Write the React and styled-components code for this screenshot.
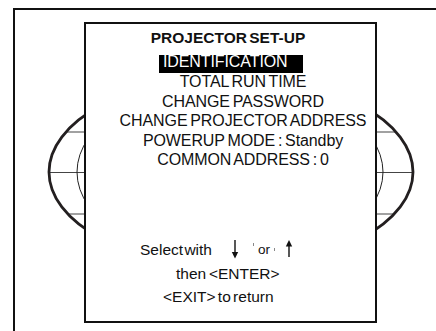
import React from 'react';
import styled, { createGlobalStyle } from 'styled-components';

const GlobalStyle = createGlobalStyle`
    html, body {
        margin: 0;
        padding: 0;
        background: #fff;
        overflow: hidden;
    }
    body {
        font-family: "Liberation Sans", Arial, sans-serif;
        color: #111;
    }
`;

const Frame = styled.div`
    position: relative;
    margin: 8px 0 0 13px;
    height: 323px;
    border-top: 2px solid #111;
    border-left: 2px solid #111;
    box-sizing: border-box;
`;

const Globe = styled.svg`
    position: absolute;
    left: 0;
    top: 0;
    width: 421px;
    height: 321px;
`;

const Screen = styled.div`
    position: relative;
    z-index: 1;
    margin: 12px 0 0 69px;
    width: 293px;
    height: 301px;
    box-sizing: border-box;
    border: 2px solid #111;
    background: #fff;
    display: flex;
    flex-direction: column;
    padding-top: 4px;
    padding-bottom: 12.5px;
`;

const Title = styled.div`
    font-weight: bold;
    font-size: 15.5px;
    line-height: 19.5px;
    height: 19.5px;
    text-align: center;
    word-spacing: -2px;
    padding-right: 5px;
`;

const Menu = styled.div`
    margin-top: 5px;
    display: flex;
    flex-direction: column;
`;

const Item = styled.div`
    font-size: 16px;
    line-height: 19.5px;
    height: 19.5px;
    text-align: center;
    white-space: nowrap;
    letter-spacing: -0.1px;
    word-spacing: -1.5px;
    padding-left: ${p => p.$shift}px;
`;

const Highlight = styled.div`
    height: 19.5px;
    padding-top: 2.5px;
    padding-left: 73px;
    box-sizing: border-box;
`;

const Bar = styled.div`
    width: 144px;
    min-width: 144px;
    height: 18px;
    box-sizing: border-box;
    padding: 0 16px 0 4px;
    background: #000;
    color: #fff;
    font-size: 16px;
    letter-spacing: -0.1px;
    line-height: 14px;
    white-space: nowrap;
`;

const Spacer = styled.div`
    flex: 1;
`;

const Hint = styled.div`
    display: flex;
    align-items: flex-start;
    height: 23.5px;
    font-size: 15.5px;
    line-height: 23.5px;
    white-space: nowrap;
    word-spacing: ${p => p.$tight}px;
    padding-left: ${p => p.$indent}px;
`;

const Arrow = styled.svg`
    flex: none;
    width: 8px;
    height: 20px;
    margin-top: 2px;
    margin-left: ${p => p.$gap}px;
`;

const Tick = styled.span`
    flex: none;
    width: 1px;
    height: 3px;
    background: #888;
    margin-top: ${p => p.$top}px;
    margin-left: ${p => p.$gap}px;
`;

const Small = styled.span`
    font-size: 13.5px;
    margin-left: 4px;
`;

function DownArrow({ gap }) {
    return (
        <Arrow $gap={gap} viewBox="0 0 8 20">
            <line x1="4" y1="0" x2="4" y2="13" stroke="#111" strokeWidth="1.4" />
            <polygon points="0.8,12 7.2,12 4,18.5" fill="#111" />
        </Arrow>
    );
}

function UpArrow({ gap }) {
    return (
        <Arrow $gap={gap} viewBox="0 0 8 20">
            <polygon points="0.8,6.5 7.2,6.5 4,0" fill="#111" />
            <line x1="4" y1="5" x2="4" y2="17" stroke="#111" strokeWidth="1.4" />
        </Arrow>
    );
}

const items = [
    'TOTAL RUN TIME',
    'CHANGE PASSWORD',
    'CHANGE PROJECTOR ADDRESS',
    'POWERUP MODE : Standby',
    'COMMON ADDRESS : 0',
];

export default function App() {
    return (
        <>
            <GlobalStyle />
            <Frame>
                <Globe viewBox="15 10 421 321">
                    <defs>
                        <clipPath id="globe-clip">
                            <ellipse cx="231" cy="172" rx="182" ry="95" />
                        </clipPath>
                    </defs>
                    <g clipPath="url(#globe-clip)" stroke="#444" strokeWidth="1.2">
                        <line x1="40" y1="132" x2="420" y2="132" />
                        <line x1="40" y1="172.5" x2="420" y2="172.5" />
                        <line x1="40" y1="214" x2="420" y2="214" />
                    </g>
                    <ellipse cx="230" cy="172" rx="153" ry="89" fill="none" stroke="#222" strokeWidth="1" />
                    <ellipse cx="231" cy="172" rx="182" ry="95" fill="none" stroke="#231f20" strokeWidth="2.8" />
                </Globe>
                <Screen>
                    <Title>PROJECTOR SET-UP</Title>
                    <Menu>
                        <Highlight>
                            <Bar>IDENTIFICATION</Bar>
                        </Highlight>
                        {items.map(text => (
                            <Item key={text} $shift={25}>{text}</Item>
                        ))}
                    </Menu>
                    <Spacer />
                    <Hint $indent={54} $tight={-3}>
                        Select with
                        <DownArrow gap={19} />
                        <Tick $gap={14} $top={5} />
                        <Small>or</Small>
                        <Tick $gap={4} $top={10} />
                        <UpArrow gap={10} />
                    </Hint>
                    <Hint $indent={90} $tight={-1.5}>then &lt;ENTER&gt;</Hint>
                    <Hint $indent={77} $tight={-2}>&lt;EXIT&gt; to return</Hint>
                </Screen>
            </Frame>
        </>
    );
}
